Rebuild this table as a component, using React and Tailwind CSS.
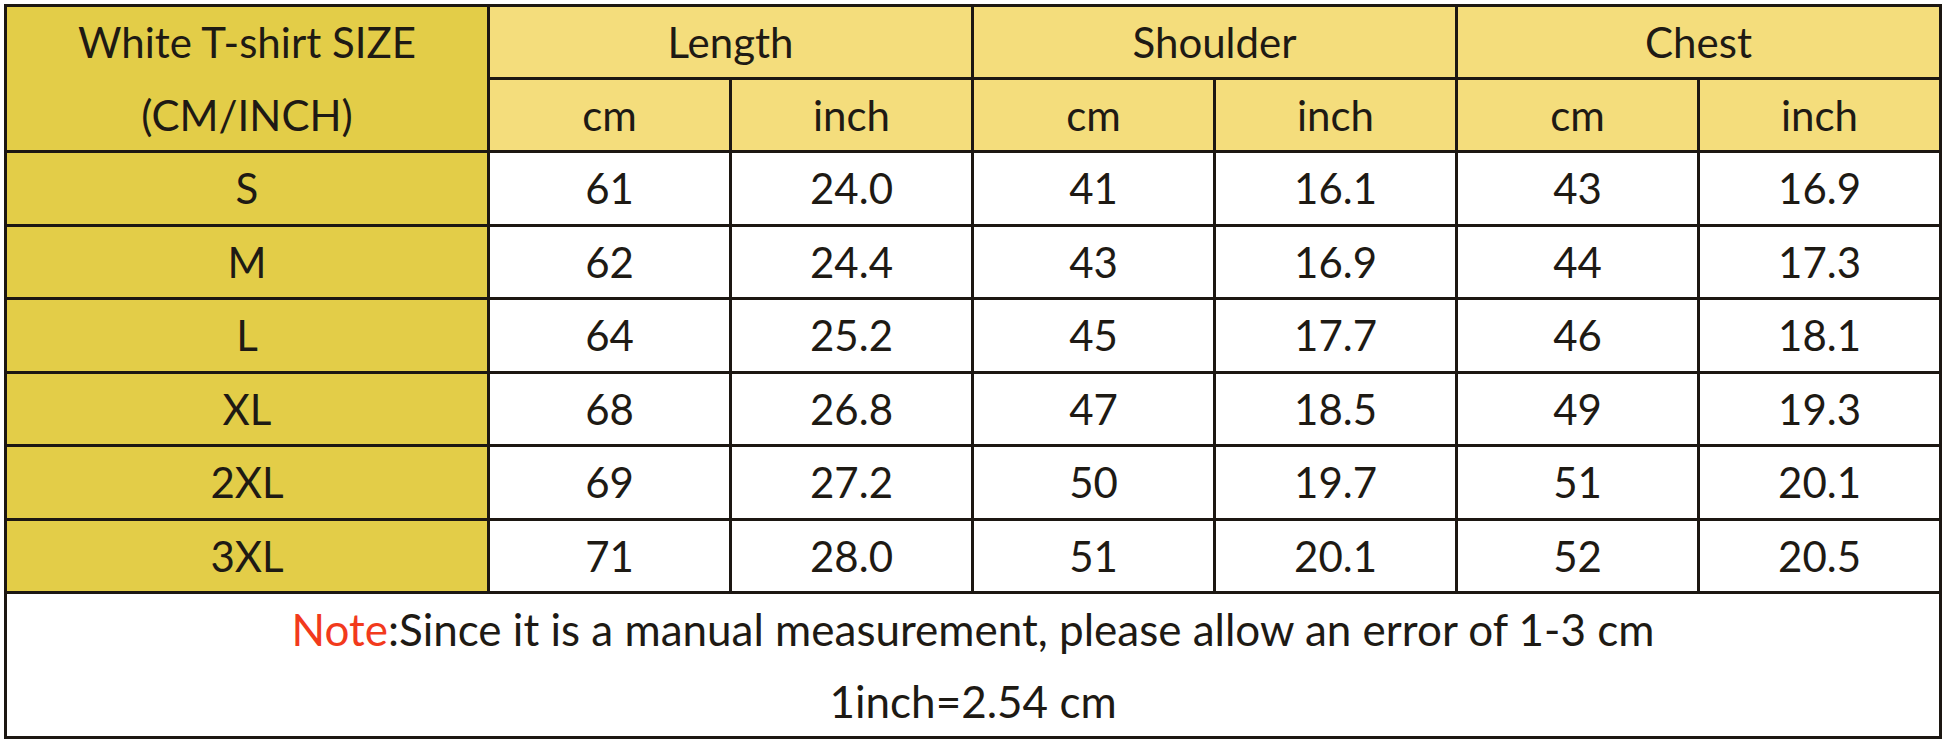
import React from "react";

const rows = [
  ["S", "61", "24.0", "41", "16.1", "43", "16.9"],
  ["M", "62", "24.4", "43", "16.9", "44", "17.3"],
  ["L", "64", "25.2", "45", "17.7", "46", "18.1"],
  ["XL", "68", "26.8", "47", "18.5", "49", "19.3"],
  ["2XL", "69", "27.2", "50", "19.7", "51", "20.1"],
  ["3XL", "71", "28.0", "51", "20.1", "52", "20.5"],
];

const cell = "border-[3px] border-[#1c1712] text-center align-middle p-0 leading-none";

export default function App() {
  return (
    <div className="w-[1946px] h-[740px] bg-white pt-[4px] pl-[4px] text-[#1e1a14] font-['Lato',_'Liberation_Sans',_sans-serif] text-[42px]">
      <table className="table-fixed border-collapse w-[1935px]">
        <colgroup>
          <col className="w-[483px]" />
          {[0, 1, 2, 3, 4, 5].map((i) => (
            <col key={i} className="w-[242px]" />
          ))}
        </colgroup>
        <thead>
          <tr className="h-[73px]">
            <th rowSpan={2} className={`${cell} bg-[#e3cd48] font-normal`}>
              <div className="leading-[70px] mb-[3px]">White T-shirt SIZE</div>
              <div className="leading-[70px]">(CM/INCH)</div>
            </th>
            <th colSpan={2} className={`${cell} bg-[#f4dd7c] font-normal`}>Length</th>
            <th colSpan={2} className={`${cell} bg-[#f4dd7c] font-normal`}>Shoulder</th>
            <th colSpan={2} className={`${cell} bg-[#f4dd7c] font-normal`}>Chest</th>
          </tr>
          <tr className="h-[73px]">
            {["cm", "inch", "cm", "inch", "cm", "inch"].map((t, i) => (
              <th key={i} className={`${cell} bg-[#f4dd7c] font-normal`}>{t}</th>
            ))}
          </tr>
        </thead>
        <tbody>
          {rows.map((r) => (
            <tr key={r[0]} className="h-[73.5px]">
              {r.map((v, i) => (
                <td key={i} className={`${cell} ${i === 0 ? "bg-[#e3cd48]" : "bg-white"}`}>{v}</td>
              ))}
            </tr>
          ))}
          <tr className="h-[145px]">
            <td colSpan={7} className={`${cell} bg-white text-[44px]`}>
              <div className="leading-[68px] mb-[4px]">
                <span className="text-[#f23a1c]">Note</span>:Since it is a manual measurement, please allow an error of 1-3 cm
              </div>
              <div className="leading-[68px]">1inch=2.54 cm</div>
            </td>
          </tr>
        </tbody>
      </table>
    </div>
  );
}
